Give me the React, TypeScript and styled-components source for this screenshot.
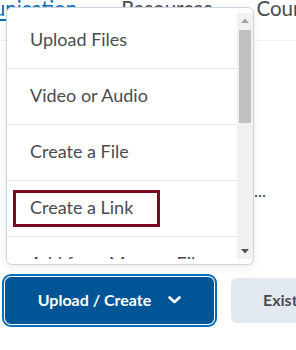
import React from 'react';
import styled, { createGlobalStyle } from 'styled-components';

const GlobalStyle = createGlobalStyle`
  html, body {
    margin: 0;
    padding: 0;
    background: #ffffff;
    font-family: Lato, "Noto Sans", sans-serif;
    overflow: hidden;
  }
`;

const Page = styled.div`
  position: relative;
  width: 296px;
  height: 350px;
  overflow: hidden;
  background: #ffffff;
`;

const TabBar = styled.div`
  display: flex;
  gap: 44px;
  height: 40px;
  margin-left: -65px;
  border-bottom: 1px solid #eceff3;
  white-space: nowrap;
`;

const Tab = styled.div<{ $active?: boolean }>`
  margin-top: -2px;
  font-size: 20.5px;
  line-height: 20px;
  height: 20px;
  color: ${(p) => (p.$active ? '#006fbf' : '#494c4e')};
  text-decoration: ${(p) => (p.$active ? 'underline' : 'none')};
  text-underline-offset: 3px;
`;

const Note = styled.div`
  width: 266px;
  margin-top: 138px;
  height: 24px;
  line-height: 24px;
  font-size: 17px;
  color: #494c4e;
  text-align: right;
  white-space: nowrap;
  overflow: hidden;
`;

const ButtonRow = styled.div`
  display: flex;
  align-items: center;
  gap: 17px;
  margin-top: 74px;
  padding-left: 5px;
  height: 47px;
  white-space: nowrap;
`;

const PrimaryButton = styled.button`
  flex: none;
  display: flex;
  align-items: center;
  justify-content: center;
  gap: 17px;
  width: 209px;
  height: 47px;
  border: none;
  border-radius: 6px;
  background: #005596;
  box-shadow: 0 0 0 1px #ffffff, 0 0 0 3px #006fbf;
  color: #ffffff;
  font-family: Lato, "Noto Sans", sans-serif;
  font-weight: 700;
  font-size: 16px;
  padding: 0 0 2px;
`;

const SecondaryButton = styled.button`
  flex: none;
  height: 45px;
  border: none;
  border-radius: 6px;
  background: #e3e9f1;
  color: #494c4e;
  font-family: Lato, "Noto Sans", sans-serif;
  font-weight: 700;
  font-size: 16px;
  padding: 0 32px 2px;
  text-align: left;
`;

const Dropdown = styled.div`
  position: absolute;
  left: 6px;
  top: 7px;
  width: 248px;
  height: 258px;
  box-sizing: border-box;
  padding: 5px 0;
  display: flex;
  background: #ffffff;
  border: 1px solid #cdd5dc;
  border-radius: 6px;
  box-shadow: 0 2px 8px rgba(0, 0, 0, 0.08);
  z-index: 2;
`;

const MenuList = styled.ul`
  flex: 1;
  list-style: none;
  margin: 0;
  padding: 0;
  overflow: hidden;
`;

const MenuItem = styled.li`
  display: flex;
  align-items: center;
  height: 56px;
  box-sizing: border-box;
  border-bottom: 1px solid #e3e9f1;
  padding: 0 0 3px 23px;
  font-size: 18px;
  color: #494c4e;
  white-space: nowrap;

  &:last-child {
    border-bottom: none;
  }
`;

const FocusedItem = styled(MenuItem)`
  padding: 0 0 1px 6px;
`;

const FocusRing = styled.span`
  display: flex;
  align-items: center;
  box-sizing: border-box;
  width: 147px;
  height: 37px;
  padding: 0 0 2px 14px;
  border: 3px solid #7c0a1e;
`;

const ScrollTrack = styled.div`
  flex: none;
  width: 16px;
  display: flex;
  flex-direction: column;
  align-items: center;
  background: #f1f1f1;
`;

const ScrollButton = styled.div`
  flex: none;
  height: 15px;
  width: 100%;
  display: flex;
  align-items: center;
  justify-content: center;
`;

const ScrollSpace = styled.div`
  flex: 1;
  width: 100%;
  padding: 2px 2px 0;
  box-sizing: border-box;
`;

const ScrollThumb = styled.div`
  height: 93px;
  background: #c1c1c1;
`;

const Arrow = ({ up, color }: { up?: boolean; color: string }) => (
  <svg width="8" height="5" viewBox="0 0 8 5">
    <path d={up ? 'M0 5 L4 0.5 L8 5 Z' : 'M0 0 L4 4.5 L8 0 Z'} fill={color} />
  </svg>
);

const Chevron = () => (
  <svg width="13" height="8" viewBox="0 0 13 8" fill="none">
    <path d="M1.5 1.5 L6.5 6 L11.5 1.5" stroke="#ffffff" strokeWidth="2.6" strokeLinecap="round" strokeLinejoin="round" />
  </svg>
);

const items = [
  'Upload Files',
  'Video or Audio',
  'Create a File',
  'Create a Link',
  'Add from Manage Files',
  'Google Drive',
  'OneDrive',
  'Add Existing Activities',
  'Create New Activity',
  'New Checklist',
];

const App = () => {
  return (
    <Page>
      <GlobalStyle />
      <TabBar>
        <Tab $active>Communication</Tab>
        <Tab>Resources</Tab>
        <Tab>Course Admin</Tab>
      </TabBar>
      <Note>Add Existing Activities...</Note>
      <ButtonRow>
        <PrimaryButton>
          <span>Upload / Create</span>
          <Chevron />
        </PrimaryButton>
        <SecondaryButton>Existing Activities</SecondaryButton>
      </ButtonRow>
      <Dropdown>
        <MenuList>
          {items.map((label) => (label === 'Create a Link' ? (
            <FocusedItem key={label}>
              <FocusRing>{label}</FocusRing>
            </FocusedItem>
          ) : (
            <MenuItem key={label}>{label}</MenuItem>
          )))}
        </MenuList>
        <ScrollTrack>
          <ScrollButton>
            <Arrow up color="#a3a3a3" />
          </ScrollButton>
          <ScrollSpace>
            <ScrollThumb />
          </ScrollSpace>
          <ScrollButton>
            <Arrow color="#505050" />
          </ScrollButton>
        </ScrollTrack>
      </Dropdown>
    </Page>
  );
};

export default App;
